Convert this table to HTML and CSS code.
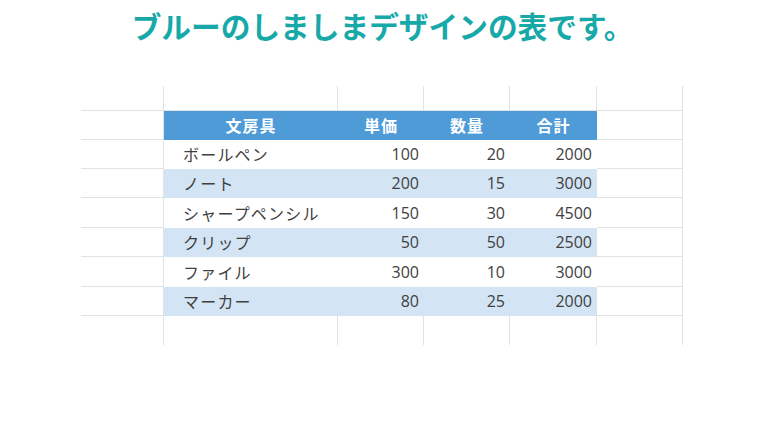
FILE: index.html
```html
<!DOCTYPE html>
<html lang="ja">
<head>
<meta charset="utf-8">
<title>ブルーのしましまデザインの表です。</title>
<link rel="stylesheet" href="styles.css">
</head>
<body>
<h1 class="title">ブルーのしましまデザインの表です。</h1>
<div class="sheet">
  <div class="cell"></div><div class="cell"></div><div class="cell"></div><div class="cell"></div><div class="cell"></div><div class="cell"></div>

  <div class="cell"></div>
  <div class="cell head">文房具</div><div class="cell head">単価</div><div class="cell head">数量</div><div class="cell head">合計</div>
  <div class="cell"></div>

  <div class="cell"></div>
  <div class="cell name odd">ボールペン</div><div class="cell num odd">100</div><div class="cell num odd">20</div><div class="cell num odd">2000</div>
  <div class="cell"></div>

  <div class="cell"></div>
  <div class="cell name even">ノート</div><div class="cell num even">200</div><div class="cell num even">15</div><div class="cell num even">3000</div>
  <div class="cell"></div>

  <div class="cell"></div>
  <div class="cell name odd">シャープペンシル</div><div class="cell num odd">150</div><div class="cell num odd">30</div><div class="cell num odd">4500</div>
  <div class="cell"></div>

  <div class="cell"></div>
  <div class="cell name even">クリップ</div><div class="cell num even">50</div><div class="cell num even">50</div><div class="cell num even">2500</div>
  <div class="cell"></div>

  <div class="cell"></div>
  <div class="cell name odd">ファイル</div><div class="cell num odd">300</div><div class="cell num odd">10</div><div class="cell num odd">3000</div>
  <div class="cell"></div>

  <div class="cell"></div>
  <div class="cell name even">マーカー</div><div class="cell num even">80</div><div class="cell num even">25</div><div class="cell num even">2000</div>
  <div class="cell"></div>

  <div class="cell last"></div><div class="cell last"></div><div class="cell last"></div><div class="cell last"></div><div class="cell last"></div><div class="cell last"></div>
</div>
</body>
</html>
```

FILE: styles.css
```css
html, body {
  margin: 0;
  padding: 0;
  background: #ffffff;
}

body {
  font-family: "Noto Sans CJK JP", "Noto Sans", sans-serif;
  color: #404040;
}

.title {
  margin: 0;
  height: 50px;
  line-height: 52px;
  font-size: 29.7px;
  font-weight: 700;
  color: #17a9a8;
  text-align: center;
  padding-right: 3px;
}

.sheet {
  margin: 36px 0 0 81px;
  display: grid;
  grid-template-columns: 83px 174px 86px 86px 87px 86px;
  grid-template-rows: 25px 29px 29px 29px 30px 29px 30px 29px 29px;
  width: 602px;
}

.cell {
  box-sizing: border-box;
  border-right: 1px solid #e2e2e2;
  border-bottom: 1px solid #e2e2e2;
  display: flex;
  align-items: center;
  font-size: 16px;
  white-space: nowrap;
}

.cell.last {
  border-bottom: none;
}

.head {
  background: #4e9bd8;
  border-color: #4e9bd8;
  color: #ffffff;
  font-weight: 700;
  justify-content: center;
  letter-spacing: 1px;
  padding-left: 1px;
}

.odd {
  background: #ffffff;
  border-color: #ffffff;
}

.even {
  background: #d3e5f5;
  border-color: #d3e5f5;
}

.name {
  padding-left: 19px;
  letter-spacing: 1.2px;
}

.num {
  font-family: "Open Sans", "Noto Sans", sans-serif;
  justify-content: flex-end;
  padding-right: 4px;
}
```
